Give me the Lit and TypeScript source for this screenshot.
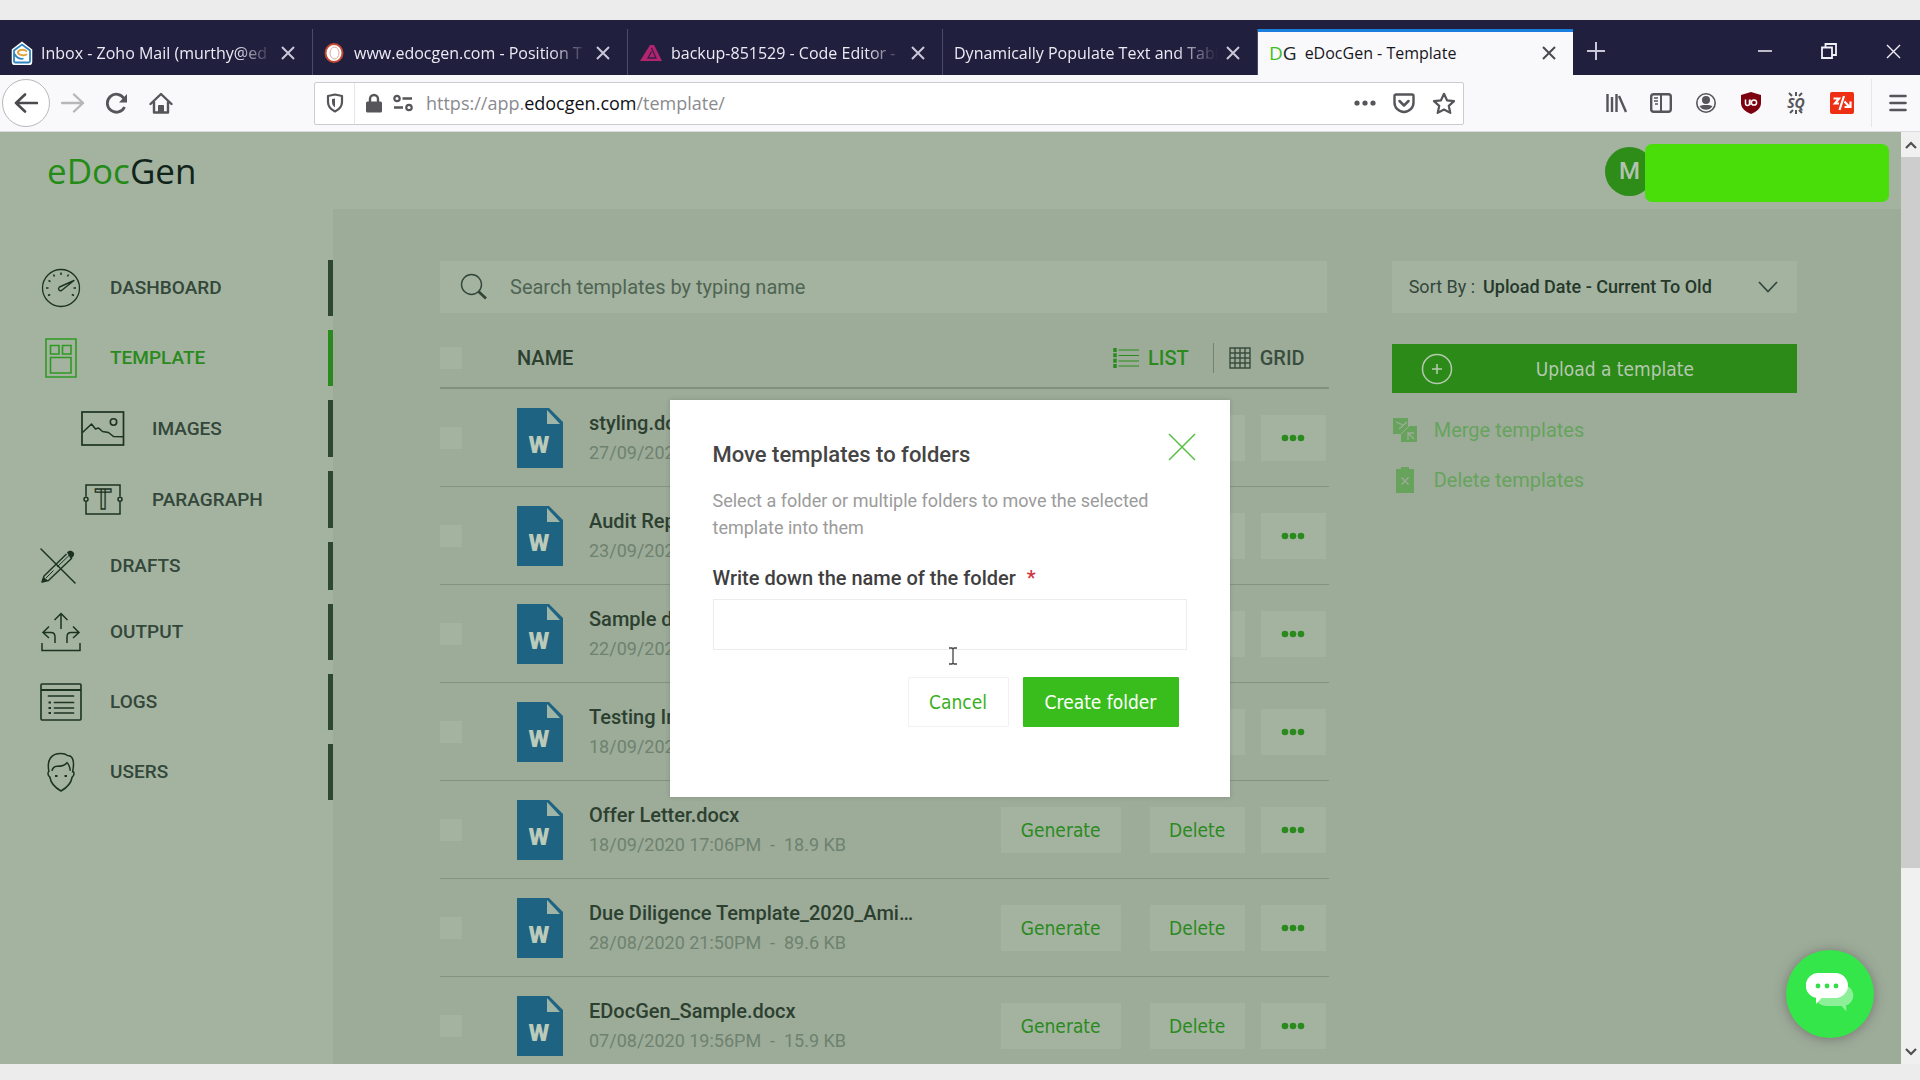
import { LitElement, html, css, svg, nothing } from "lit";
import { customElement, property } from "lit/decorators.js";
import { classMap } from "lit/directives/class-map.js";

const icon = (w: number, h: number, body: unknown) =>
  html`<svg width=${w} height=${h} viewBox="0 0 ${w} ${h}" fill="none" stroke="currentColor" aria-hidden="true">${body}</svg>`;

const cross = (size: number, stroke: number) =>
  icon(size, size, svg`<path d="M1 1L${size - 1} ${size - 1}M${size - 1} 1L1 ${size - 1}" stroke-width=${stroke} />`);

const ICONS = {
  zoho: icon(22, 24, svg`
    <path d="M2 9L11 2l9 7v12a2 2 0 0 1-2 2H4a2 2 0 0 1-2-2z" fill="#fff" stroke="#fff" stroke-width="2.5" />
    <path d="M3 9.500L11 3.500l8 6V20a1.500 1.500 0 0 1-1.500 1.500h-13A1.500 1.500 0 0 1 3 20z" stroke="#2f86bd" stroke-width="1.800" />
    <path d="M3.500 13c2 4 6 5.500 9 4.500" stroke="#2f86bd" stroke-width="1.800" />
    <path d="M16 10.500c-4-3-9-1.500-9 1s7 4 9 1.500" stroke="#e0a23c" stroke-width="2" />`),
  orb: icon(22, 22, svg`
    <ellipse cx="10" cy="11" rx="8.500" ry="9" fill="#fff" stroke="#c4482f" stroke-width="2" />
    <ellipse cx="10.500" cy="11" rx="4.500" ry="6" fill="#fff" stroke="#d9a79b" stroke-width="1" />`),
  pyramid: icon(24, 18, svg`
    <path d="M11 1h4l8 16H1z" fill="#b3246f" stroke="none" />
    <path d="M12.500 4l4.500 10h-8l3.500-6.500" stroke="#3a1e4c" stroke-width="1.300" />`),
  plus: icon(20, 20, svg`<path d="M10 1v18M1 10h18" stroke-width="2" />`),
  minimise: icon(14, 14, svg`<path d="M0 7h14" stroke-width="1.500" />`),
  restore: icon(16, 16, svg`<path d="M1 4.500h10V15H1zM4.500 4V1H15v11h-3.500" stroke-width="1.800" />`),
  back: icon(24, 20, svg`<path d="M23 10H2M11 1.500L2 10l9 8.500" stroke-width="2.600" stroke-linecap="round" stroke-linejoin="round" />`),
  forward: icon(24, 20, svg`<path d="M1 10h21M13 1.500l9 8.500-9 8.500" stroke-width="2.400" stroke-linecap="round" stroke-linejoin="round" />`),
  reload: icon(24, 22, svg`<path d="M19.500 15A9 9 0 1 1 19 6.500" stroke-width="2.800" /><path d="M22 2v8.500h-8z" fill="currentColor" stroke="none" />`),
  home: icon(24, 22, svg`<path d="M1.500 12L12 2l10.500 10M5 10v10.500h14V10" stroke-width="2.400" stroke-linejoin="round" stroke-linecap="round" /><path d="M9.500 20v-6.500h5V20" fill="currentColor" />`),
  shield: icon(18, 20, svg`<path d="M9 1.500l7 1.500v6c0 4.500-3 7.500-7 9.500-4-2-7-5-7-9.500V3z" stroke-width="2.200" stroke-linejoin="round" /><path d="M9 5.500v9c-2-1.500-3-3-3-5.500V6z" fill="currentColor" stroke="none" />`),
  lock: icon(18, 20, svg`<path d="M5 10V6a4 4 0 0 1 8 0v4" stroke-width="2.400" /><rect x="1" y="8.500" width="16" height="11" rx="1.500" fill="currentColor" stroke="none" />`),
  permissions: icon(20, 18, svg`<circle cx="4" cy="4.500" r="2.700" stroke-width="2.200" /><path d="M9.500 4.500H19M1 13.500h9" stroke-width="2.600" /><circle cx="16" cy="13.500" r="2.700" stroke-width="2.200" />`),
  more: icon(22, 6, svg`<g fill="currentColor" stroke="none"><circle cx="3" cy="3" r="2.600" /><circle cx="11" cy="3" r="2.600" /><circle cx="19" cy="3" r="2.600" /></g>`),
  pocket: icon(22, 21, svg`<path d="M3 1.500h16A1.500 1.500 0 0 1 20.500 3v6.500a9.500 9.500 0 0 1-19 0V3A1.500 1.500 0 0 1 3 1.500z" stroke-width="2.400" /><path d="M6.500 8l4.500 4.500L15.500 8" stroke-width="2.500" stroke-linecap="round" stroke-linejoin="round" />`),
  star: icon(24, 22, svg`<path d="M12 1.800l3 6.500 7 .8-5.200 4.800 1.500 7L12 17.500 5.700 20.900l1.500-7L2 9.100l7-.8z" stroke-width="2.200" stroke-linejoin="round" />`),
  library: icon(21, 20, svg`<path d="M1.500 1v18M6 4v15M10.500 1v18M13 3l7 16" stroke-width="2.400" />`),
  sidebar: icon(22, 20, svg`<rect x="1.200" y="1.200" width="19.600" height="17.600" rx="2.500" stroke-width="2.400" /><path d="M11 1v18" stroke-width="2" /><path d="M4 5h4M4 8h4M5 11h3" stroke-width="1.500" />`),
  account: icon(22, 22, svg`<circle cx="11" cy="11" r="9.200" stroke-width="1.600" /><circle cx="11" cy="8" r="4" fill="currentColor" stroke="none" /><path d="M4.500 14c2-1.500 11-1.500 13 0-1.500 2.800-4 3.800-6.500 3.800S6 16.800 4.500 14z" fill="currentColor" stroke="none" />`),
  ublock: icon(22, 22, svg`<path d="M11 0l10 3v8c0 5-4 8.500-10 11C5 19.500 1 16 1 11V3z" fill="#7c0010" stroke="none" /><path d="M5.500 7.500v4a2 2 0 0 0 4 0v-4M10 13V7.500" stroke="#fff" stroke-width="1.500" /><circle cx="14" cy="10.500" r="2.600" stroke="#fff" stroke-width="1.500" />`),
  seo: icon(22, 22, svg`<path d="M4 1l3 3M11 0v4M17 1l-3 3M5 21l3-3M11 18v4M17 21l-3-3" stroke-width="2" /><text x="11" y="16" text-anchor="middle" font-family="Open Sans, sans-serif" font-size="14" font-weight="700" font-style="italic" fill="currentColor" stroke="none">SQ</text>`),
  redirect: icon(24, 22, svg`<rect width="24" height="22" rx="2" fill="#ee2f14" stroke="none" /><path d="M3.500 6.500h5.500L5 11.500h4M14 4L9.500 18M14.500 9.500l5 5.500M20.500 9.500v5.500h-6" stroke="#fff" stroke-width="2.200" />`),
  menu: icon(18, 18, svg`<path d="M1.500 2h15M1.500 9h15M1.500 16h15" stroke-width="2.600" stroke-linecap="round" />`),
  up: icon(12, 8, svg`<path d="M1 7l5-5 5 5" stroke-width="2.200" />`),
  down: icon(12, 8, svg`<path d="M1 1l5 5 5-5" stroke-width="2.200" />`),
  dashboard: icon(40, 40, svg`
    <circle cx="20" cy="20" r="18.500" stroke-width="1.300" />
    <path d="M20 4.500v2.500M12.500 6.500l1 2M27.500 6.500l-1 2M7.500 12.500l2 1.200M5 20h2.500M7 27.500l2.200-1M35 20h-2.500M33 27.500l-2.200-1" stroke-width="1.500" />
    <path d="M33 12.500L18.500 19c-2 1.500-.5 4.500 2 3.500z" stroke-width="1.400" stroke-linejoin="round" />`),
  template: icon(32, 40, svg`<path d="M1 1h30v38H1zM5.500 7.500h8.500V16H5.500zM17.500 7.500H26V16h-8.500zM5.500 19.500H26V35H5.500z" stroke-width="1.600" />`),
  images: icon(44, 35, svg`<rect x="1" y="1" width="41.500" height="33" stroke-width="1.700" /><circle cx="32.500" cy="11" r="3.200" stroke-width="1.600" /><path d="M1.500 21.500L10.500 13l4 5 3-1 4 3.500 6 1 5 4 9.500.3" stroke-width="1.600" stroke-linejoin="round" />`),
  paragraph: icon(40, 31, svg`<path d="M3 12.500V1h34v11.500M3 18v12h34V18" stroke-width="1.500" /><circle cx="3" cy="15.300" r="2" stroke-width="1.500" /><circle cx="37" cy="15.300" r="2" stroke-width="1.500" /><text x="20" y="25" text-anchor="middle" font-family="Roboto, sans-serif" font-size="27" font-weight="700" stroke-width="1.300">T</text>`),
  drafts: icon(42, 36, svg`
    <path d="M1 1l34 34" stroke-width="1.500" stroke-linecap="round" />
    <path d="M26.500 6L4 28l-2 6 6.500-1.500L32 10" stroke-width="1.400" stroke-linejoin="round" />
    <path d="M29 7.500L17 19M13.500 22.500L6 30" stroke-width="1" />
    <path d="M27 4.500c2-3.500 8-1.500 7 2.500-.5 2-2 3-3.500 3.500z" fill="currentColor" stroke="none" />
    <path d="M3.500 29l4.500 3.500-6.500 2z" fill="currentColor" stroke="none" />`),
  output: icon(40, 40, svg`
    <path d="M20 17V2M13.500 8L20 1.500 26.500 8" stroke-width="1.500" />
    <path d="M14 31v-6c0-3.500-1.500-4.500-4-4.500H2M8 14.500L2 20.500l6 5.500" stroke-width="1.500" />
    <path d="M26 31v-6c0-3.500 1.500-4.500 4-4.500h8M32 14.500l6 6-6 5.500" stroke-width="1.500" />
    <path d="M1 31v7.500h38V31" stroke-width="1.500" />`),
  logs: icon(42, 38, svg`<rect x="1" y="1" width="40" height="36" rx="1" stroke-width="1.600" /><path d="M1 7h40" stroke-width="1.800" /><path d="M8.500 13h25M14.500 19.500h19M14.500 25h19M14.500 30h19" stroke-width="1.700" stroke-linecap="round" /><path d="M8.500 19.500h2.500M8.500 25h2.500M8.500 30h2.500" stroke-width="2" />`),
  users: icon(30, 40, svg`
    <path d="M3 20C.5 8 5 1.500 15 1.500c3 0 5 .7 6.500 2 5 0 7 5 5.500 14l-.5 3" stroke-width="1.500" />
    <path d="M3 19.500c-1.800.5-1 4.500.8 5.500C5 32 10.500 36.500 15 39c4.500-2.500 10-7 11.200-14 1.800-1 2.600-5 .8-5.500" stroke-width="1.500" />
    <path d="M6 19c.5-3 2-4.500 5-4.700 4 0 7.500-.6 10-3.600 2.500 2.300 3 5 3.300 8" stroke-width="1.500" />
    <path d="M9 24h2.500M18.500 24H21" stroke-width="2" />`),
  search: icon(28, 28, svg`<circle cx="11.500" cy="11.500" r="10" stroke-width="1.400" /><path d="M18.500 18.500l7.500 7" stroke-width="2.800" />`),
  list: icon(26, 20, svg`<path d="M5.500 2H26M5.500 7.500H26M5.500 13H26M5.500 18H26" stroke-width="1" /><path d="M2 0v20" stroke-width="3.500" stroke-dasharray="4 1.330" />`),
  grid: icon(22, 22, svg`<path d="M1 1h20v20H1zM6 1v20M11 1v20M16 1v20M1 6h20M1 11h20M1 16h20" stroke-width="1.400" />`),
  doc: html`<svg width="46" height="60" viewBox="0 0 46 60" role="img" aria-label="Word document">
    <path d="M0 0h32l14 14v46H0z" fill="#1f6383" />
    <path d="M30 2v14h13z" fill="#9fb5a6" />
    <text x="22" y="45" text-anchor="middle" font-family="Roboto, sans-serif" font-size="24" font-weight="900" fill="#bccbb9">W</text></svg>`,
  chevron: icon(20, 12, svg`<path d="M1 1l9 9.500L19 1" stroke-width="1.700" />`),
  circlePlus: icon(32, 32, svg`<circle cx="16" cy="16" r="14.500" stroke-width="1.500" /><path d="M16 11v10M11 16h10" stroke-width="1.600" />`),
  merge: icon(24, 24, svg`<path d="M0 0h15v8h9v16H8v-8H0z" fill="currentColor" stroke="none" /><path d="M3 4l7 3M6 11l8-7M15 22v-7h6M15 15l6 6" stroke="#9cac99" stroke-width="1.300" /><path d="M8 16l8-8" stroke="#9cac99" stroke-width="1" />`),
  bin: icon(24, 26, svg`<path d="M3 2h5V0h8v2h5v24H3z" fill="currentColor" stroke="none" /><path d="M8.500 10.500l7 7M15.500 10.500l-7 7" stroke="#9cac99" stroke-width="1.300" />`),
  dots: icon(24, 8, svg`<g fill="currentColor" stroke="none"><circle cx="4" cy="4" r="3.300" /><circle cx="12" cy="4" r="3.300" /><circle cx="20" cy="4" r="3.300" /></g>`),
  caret: icon(8, 18, svg`<path d="M0 1h3l1 1 1-1h3M4 2v14M0 17h3l1-1 1 1h3" stroke-width="1.300" />`),
  chat: icon(48, 42, svg`
    <path d="M20 12h17a10.500 10.500 0 0 1 3 20.500l.5 6-5-5.500H20a10.500 10.500 0 0 1 0-21z" fill="#8df098" stroke="none" />
    <path d="M12.500 0h17a12.500 12.500 0 0 1 0 25H15.500L10 31v-6.200A12.500 12.500 0 0 1 12.500 0z" fill="#fff" stroke="none" />
    <g fill="#35dd49" stroke="none"><circle cx="12" cy="13" r="2.400" /><circle cx="21" cy="13" r="2.400" /><circle cx="30" cy="13" r="2.400" /></g>`),
};

interface Tab { title: string; icon?: unknown; active?: boolean }
const TABS: Tab[] = [
  { title: "Inbox - Zoho Mail (murthy@ed", icon: ICONS.zoho },
  { title: "www.edocgen.com - Position T", icon: ICONS.orb },
  { title: "backup-851529 - Code Editor -", icon: ICONS.pyramid },
  { title: "Dynamically Populate Text and Tabl" },
  { title: "eDocGen - Template", icon: html`<span class="dg"><b>D</b>G</span>`, active: true },
];

@customElement("browser-chrome")
export class BrowserChrome extends LitElement {
  static styles = css`
    :host { display: block; font-family: "Open Sans", "Noto Sans", sans-serif; }
    * { box-sizing: border-box; }
    button { border: 0; padding: 0; background: none; color: inherit; font: inherit; display: flex; align-items: center; justify-content: center; }
    svg { display: block; flex: none; }
    .tabs { display: flex; height: 55px; padding-top: 9px; background: #211f3e; color: #eceaf3; }
    .tab { flex: 0 1 315px; display: flex; align-items: center; gap: 8px; padding: 2px 17px 0 11px; border-right: 1px solid #4d4a68; font-size: 16px; min-width: 0; }
    .tab:first-child { flex-basis: 313px; }
    .tab.active { background: #f9f9fb; color: #16161c; border-right: 0; border-top: 3px solid #1a7fdc; padding: 0 17px 2px 11px; }
    .title { flex: 1; min-width: 0; overflow: hidden; white-space: nowrap; line-height: 24px; mask-image: linear-gradient(to right, #000 84%, transparent); }
    .active .title { mask-image: none; }
    .tab button { color: #c9c7d8; }
    .active button { color: #4a4a4f; }
    .dg { font-family: "Liberation Sans Narrow", "Open Sans", sans-serif; font-size: 19px; line-height: 24px; color: #20242a; }
    .dg b { font-weight: 400; color: #3cc01e; }
    .new { width: 46px; color: #c9c7d8; }
    .window { margin-left: auto; display: flex; gap: 49px; padding: 0 19px 2px 0; color: #f1f0f6; }
    .tabs .new { padding-bottom: 2px; }
    .bar { display: flex; align-items: center; height: 57px; padding: 0 13px 0 2px; background: #f9f9fb; color: #55555a; border-bottom: 1px solid #dcdce0; }
    .nav { display: flex; align-items: center; gap: 20px; flex: 0 0 312px; }
    .back { width: 48px; height: 48px; border: 1px solid #b9b9bd; border-radius: 50%; background: #fff; color: #4a4a4f; }
    .nav .forward { color: #b7b7ba; margin-left: -9px; }
    .url { flex: 0 1 1150px; display: flex; align-items: center; height: 43px; padding: 0 7px 0 11px; background: #fff; border: 1px solid #ccccd0; border-radius: 2px; gap: 10px; }
    .rule { width: 1px; align-self: stretch; background: #e6e6e9; }
    .address { flex: 1; font-size: 18px; line-height: 26px; color: #8a8a8f; white-space: nowrap; margin-left: 3px; }
    .address b { font-weight: 400; color: #101014; }
    .tools { display: flex; align-items: center; gap: 17px; }
    .ext { margin-left: auto; display: flex; align-items: center; gap: 23px; height: 100%; }
    .ext .rule { margin: 4px -6px; }
  `;

  render() {
    return html`
      <div class="tabs" role="tablist">
        ${TABS.map((t) => html`
          <div class=${classMap({ tab: true, active: !!t.active })} role="tab" aria-selected=${t.active ? "true" : "false"}>
            ${t.icon ?? nothing}<span class="title">${t.title}</span>
            <button aria-label="Close tab">${cross(14, 2)}</button>
          </div>`)}
        <button class="new" aria-label="New tab">${ICONS.plus}</button>
        <div class="window">
          <button aria-label="Minimise">${ICONS.minimise}</button>
          <button aria-label="Restore">${ICONS.restore}</button>
          <button aria-label="Close">${cross(15, 1.4)}</button>
        </div>
      </div>
      <div class="bar">
        <nav class="nav">
          <button class="back" aria-label="Back">${ICONS.back}</button>
          <button class="forward" aria-label="Forward">${ICONS.forward}</button>
          <button aria-label="Reload">${ICONS.reload}</button>
          <button aria-label="Home">${ICONS.home}</button>
        </nav>
        <div class="url">
          ${ICONS.shield}<span class="rule"></span>${ICONS.lock}${ICONS.permissions}
          <span class="address">https://app.<b>edocgen.com</b>/template/</span>
          <div class="tools">
            <button aria-label="Page actions">${ICONS.more}</button>
            <button aria-label="Save to Pocket">${ICONS.pocket}</button>
            <button aria-label="Bookmark">${ICONS.star}</button>
          </div>
        </div>
        <div class="ext">
          <button aria-label="Library">${ICONS.library}</button>
          <button aria-label="Sidebars">${ICONS.sidebar}</button>
          <button aria-label="Account">${ICONS.account}</button>
          <button aria-label="uBlock Origin">${ICONS.ublock}</button>
          <button aria-label="SEO extension">${ICONS.seo}</button>
          <button aria-label="Redirect extension">${ICONS.redirect}</button>
          <span class="rule"></span>
          <button aria-label="Menu">${ICONS.menu}</button>
        </div>
      </div>`;
  }
}

const NAV = [
  { label: "DASHBOARD", icon: ICONS.dashboard },
  { label: "TEMPLATE", icon: ICONS.template, active: true },
  { label: "IMAGES", icon: ICONS.images, sub: true },
  { label: "PARAGRAPH", icon: ICONS.paragraph, sub: true },
  { label: "DRAFTS", icon: ICONS.drafts, short: true },
  { label: "OUTPUT", icon: ICONS.output },
  { label: "LOGS", icon: ICONS.logs },
  { label: "USERS", icon: ICONS.users },
];

@customElement("side-nav")
export class SideNav extends LitElement {
  static styles = css`
    :host { display: block; background: #a3b3a0; padding-top: 51px; }
    nav { display: flex; flex-direction: column; gap: 14px; }
    a { box-sizing: border-box; display: flex; align-items: center; height: 56px; padding-left: 38px; border-right: 5px solid #2d4731; color: #33473a; font: 500 19px/24px Roboto, sans-serif; text-decoration: none; }
    a.short { height: 48px; }
    a.sub { height: 57px; padding-left: 80px; }
    a.active { color: #2b8a1d; border-color: #2b8a1d; }
    .glyph { display: flex; justify-content: center; width: 46px; margin-right: 26px; color: #1c3322; }
    .active .glyph { color: #2f9a22; }
    svg { display: block; }
  `;
  render() {
    return html`<nav>${NAV.map((n) => html`
      <a href="#" class=${classMap({ active: !!n.active, sub: !!n.sub, short: !!n.short })}>
        <span class="glyph">${n.icon}</span>${n.label}</a>`)}</nav>`;
  }
}

interface TemplateFile { name: string; meta: string; covered?: boolean }
const FILES: TemplateFile[] = [
  { name: "styling.do", meta: "27/09/202", covered: true },
  { name: "Audit Rep", meta: "23/09/202", covered: true },
  { name: "Sample d", meta: "22/09/202", covered: true },
  { name: "Testing In", meta: "18/09/202", covered: true },
  { name: "Offer Letter.docx", meta: "18/09/2020 17:06PM  -  18.9 KB" },
  { name: "Due Diligence Template_2020_Ami…", meta: "28/08/2020 21:50PM  -  89.6 KB" },
  { name: "EDocGen_Sample.docx", meta: "07/08/2020 19:56PM  -  15.9 KB" },
];

@customElement("template-list")
export class TemplateList extends LitElement {
  static styles = css`
    :host { display: block; font: 400 20px/24px Roboto, sans-serif; color: #2d4030; }
    * { box-sizing: border-box; }
    svg { display: block; flex: none; }
    button { border: 0; background: none; padding: 0; color: inherit; font: inherit; }
    .search { display: flex; align-items: center; gap: 22px; height: 52px; margin: 0 2px 16px 0; padding-left: 20px; background: #a3b3a0; color: #33463a; }
    .search input { flex: 1; min-width: 0; border: 0; padding: 0; background: none; font: inherit; color: inherit; outline: 0; }
    .search input::placeholder { color: #506453; opacity: 1; }
    table { width: 100%; border-spacing: 0; table-layout: fixed; }
    .check { width: 77px; }
    .actions { width: 328px; }
    th, td { padding: 0; text-align: left; font-weight: 400; }
    thead th { height: 60px; border-bottom: 2px solid #7f917e; font-weight: 500; }
    tbody th, tbody td { height: 98px; border-bottom: 1px solid #82947f; }
    input[type="checkbox"] { appearance: none; display: block; width: 22px; height: 22px; margin: 0; background: #a3b3a0; }
    .views { display: flex; justify-content: flex-end; align-items: center; padding-right: 24px; }
    .views button { display: flex; align-items: center; gap: 9px; font-weight: 500; color: #3a4c3d; }
    .views .on { color: #2b8a1d; padding-right: 24px; margin-right: 15px; height: 30px; border-right: 1px solid #6f826f; }
    .file { display: flex; align-items: center; gap: 26px; }
    .name { display: block; font-weight: 500; line-height: 30px; white-space: nowrap; }
    .meta { display: block; font-size: 18px; line-height: 30px; white-space: pre; color: #6f826f; }
    .row { display: flex; align-items: center; }
    .row button { height: 46px; background: #a3b3a0; color: #2b8a1d; font: 400 19px/24px "DejaVu Sans Condensed", "Open Sans", sans-serif; display: flex; align-items: center; justify-content: center; }
    .row .generate { flex: 0 0 120px; margin-right: 29px; }
    .row .delete { flex: 0 0 95px; margin-right: 16px; }
    .row .dots { flex: 0 0 65px; }
  `;
  render() {
    return html`
      <label class="search">${ICONS.search}<input type="search" placeholder="Search templates by typing name" aria-label="Search templates" /></label>
      <table>
        <thead>
          <tr>
            <th class="check"><input type="checkbox" aria-label="Select all" /></th>
            <th>NAME</th>
            <th class="actions"><div class="views">
              <button class="on">${ICONS.list}LIST</button>
              <button>${ICONS.grid}GRID</button>
            </div></th>
          </tr>
        </thead>
        <tbody>${FILES.map((f) => html`
          <tr>
            <td><input type="checkbox" aria-label=${"Select " + f.name} /></td>
            <th scope="row"><div class="file">${ICONS.doc}<span><span class="name">${f.name}</span><span class="meta">${f.meta}</span></span></div></th>
            <td><div class="row">
              <button class="generate" aria-label="Generate">${f.covered ? nothing : "Generate"}</button>
              <button class="delete" aria-label="Delete">${f.covered ? nothing : "Delete"}</button>
              <button class="dots" aria-label="More">${ICONS.dots}</button>
            </div></td>
          </tr>`)}</tbody>
      </table>`;
  }
}

@customElement("template-tools")
export class TemplateTools extends LitElement {
  static styles = css`
    :host { display: flex; flex-direction: column; font: 400 18px/24px Roboto, sans-serif; color: #33463a; }
    * { box-sizing: border-box; }
    svg { display: block; flex: none; }
    .sort { display: flex; align-items: center; height: 52px; padding: 0 19px 0 17px; background: #a3b3a0; white-space: pre; }
    select { flex: 1; min-width: 0; appearance: none; border: 0; background: none; padding: 0; margin: 0 0 0 8px; font: inherit; font-weight: 500; color: #25382a; }
    button { display: flex; align-items: center; border: 0; padding: 0; background: none; text-align: left; }
    .upload { height: 49px; margin: 31px 0 24px; padding: 0 0 0 29px; background: #2c8a18; color: #b5c9b0; font: 400 19px/24px "DejaVu Sans Condensed", "Open Sans", sans-serif; }
    .upload span { flex: 1; text-align: center; padding-right: 20px; }
    .action { gap: 17px; height: 26px; margin-bottom: 24px; padding-left: 1px; color: #67a35d; font: 400 20px/24px Roboto, sans-serif; }
  `;
  render() {
    return html`
      <label class="sort">Sort By :<select><option>Upload Date - Current To Old</option></select>${ICONS.chevron}</label>
      <button class="upload">${ICONS.circlePlus}<span>Upload a template</span></button>
      <button class="action">${ICONS.merge}Merge templates</button>
      <button class="action">${ICONS.bin}Delete templates</button>`;
  }
}

@customElement("folder-dialog")
export class FolderDialog extends LitElement {
  @property() heading = "Move templates to folders";
  static styles = css`
    :host { display: block; width: 560px; font: 400 18px/27px Roboto, sans-serif; }
    * { box-sizing: border-box; }
    form { position: relative; min-height: 397px; margin: 0; padding: 33px 43px 66px; background: #fff; box-shadow: 0 0 4px rgba(70, 60, 60, 0.25); }
    svg { display: block; }
    header { display: flex; justify-content: space-between; margin-right: -9px; }
    h2 { margin: 7px 0 0; font-weight: 500; font-size: 22px; line-height: 30px; color: #454545; }
    button { border: 0; padding: 0; background: none; }
    .close { align-self: flex-start; color: #55c043; }
    p { margin: 17px 0 25px; color: #9b9b9b; }
    label { display: block; margin-bottom: 9px; font-weight: 500; font-size: 20px; line-height: 24px; color: #3f3f3f; }
    .required { margin-left: 6px; color: #d1343f; }
    input { display: block; width: 100%; height: 51px; border: 1px solid #ececec; padding: 0 12px; font: inherit; }
    footer { display: flex; justify-content: flex-end; gap: 14px; padding: 27px 8px 0 0; }
    footer button { height: 50px; font: 400 19px/24px "DejaVu Sans Condensed", "Open Sans", sans-serif; border-radius: 1px; }
    .cancel { width: 101px; border: 1px solid #f1f1f1; color: #39b021; }
    .create { width: 156px; background: #39bd1c; color: #fff; }
    .pointer { position: absolute; left: 279px; top: 247px; color: #444; }
  `;
  render() {
    return html`
      <form role="dialog" aria-labelledby="t">
        <header><h2 id="t">${this.heading}</h2><button class="close" type="button" aria-label="Close">${cross(28, 1.5)}</button></header>
        <p>Select a folder or multiple folders to move the selected template into them</p>
        <label for="folder">Write down the name of the folder <span class="required">*</span></label>
        <input id="folder" type="text" />
        <footer><button class="cancel" type="button">Cancel</button><button class="create" type="button">Create folder</button></footer>
        <span class="pointer">${ICONS.caret}</span>
      </form>`;
  }
}

@customElement("app-root")
export class AppRoot extends LitElement {
  static styles = css`
    :host { box-sizing: border-box; display: flex; flex-direction: column; height: 100vh; padding: 20px 0 16px; background: #ececec; overflow: hidden; }
    * { box-sizing: border-box; }
    svg { display: block; }
    .view { flex: 1; min-height: 0; display: flex; }
    .page { position: relative; flex: 1; min-width: 0; display: flex; flex-direction: column; overflow: hidden; background: #9cac99; }
    .top { flex: none; display: flex; align-items: center; height: 77px; padding: 5px 12px 0 47px; background: #a3b3a0; }
    .logo { margin-right: auto; padding-bottom: 4px; font: 400 35px/44px "Open Sans", sans-serif; color: #10241a; text-decoration: none; }
    .logo span { color: #258b17; }
    .avatar { display: grid; place-items: center; width: 49px; height: 49px; margin-bottom: 4px; border-radius: 50%; background: #2e8c19; color: #b3c2ae; font: 500 24px/28px Roboto, sans-serif; }
    .account { width: 244px; height: 58px; margin-left: -9px; border-radius: 7px; background: #49dd0a; z-index: 1; }
    .body { flex: 1; min-height: 0; display: flex; }
    side-nav { flex: 0 0 333px; }
    main { flex: 1; min-width: 0; display: grid; grid-template-columns: minmax(0, 888fr) minmax(0, 405fr); gap: 63px; padding: 52px 104px 0 107px; }
    .veil { position: absolute; inset: 0; display: flex; align-items: center; justify-content: center; padding-right: 2px; }
    .chat { position: absolute; right: 27px; bottom: 26px; display: grid; place-items: center; width: 88px; height: 88px; border: 0; border-radius: 50%; padding: 0; background: #35e64b; box-shadow: 0 1px 12px rgba(90, 70, 80, 0.55); }
    .scroll { flex: 0 0 19px; display: flex; flex-direction: column; background: #f0f0f0; color: #505050; }
    .scroll button { flex: 0 0 25px; display: grid; place-items: center; border: 0; padding: 0; background: none; color: inherit; }
    .thumb { flex: 711; background: #cdcdcd; }
    .rest { flex: 171; }
  `;
  render() {
    return html`
      <browser-chrome></browser-chrome>
      <div class="view">
        <div class="page">
          <header class="top">
            <a class="logo" href="#"><span>eDoc</span>Gen</a>
            <span class="avatar">M</span><span class="account"></span>
          </header>
          <div class="body">
            <side-nav></side-nav>
            <main><template-list></template-list><template-tools></template-tools></main>
          </div>
          <div class="veil"><folder-dialog></folder-dialog></div>
          <button class="chat" aria-label="Chat">${ICONS.chat}</button>
        </div>
        <div class="scroll">
          <button aria-label="Scroll up">${ICONS.up}</button>
          <div class="thumb"></div><div class="rest"></div>
          <button aria-label="Scroll down">${ICONS.down}</button>
        </div>
      </div>`;
  }
}
